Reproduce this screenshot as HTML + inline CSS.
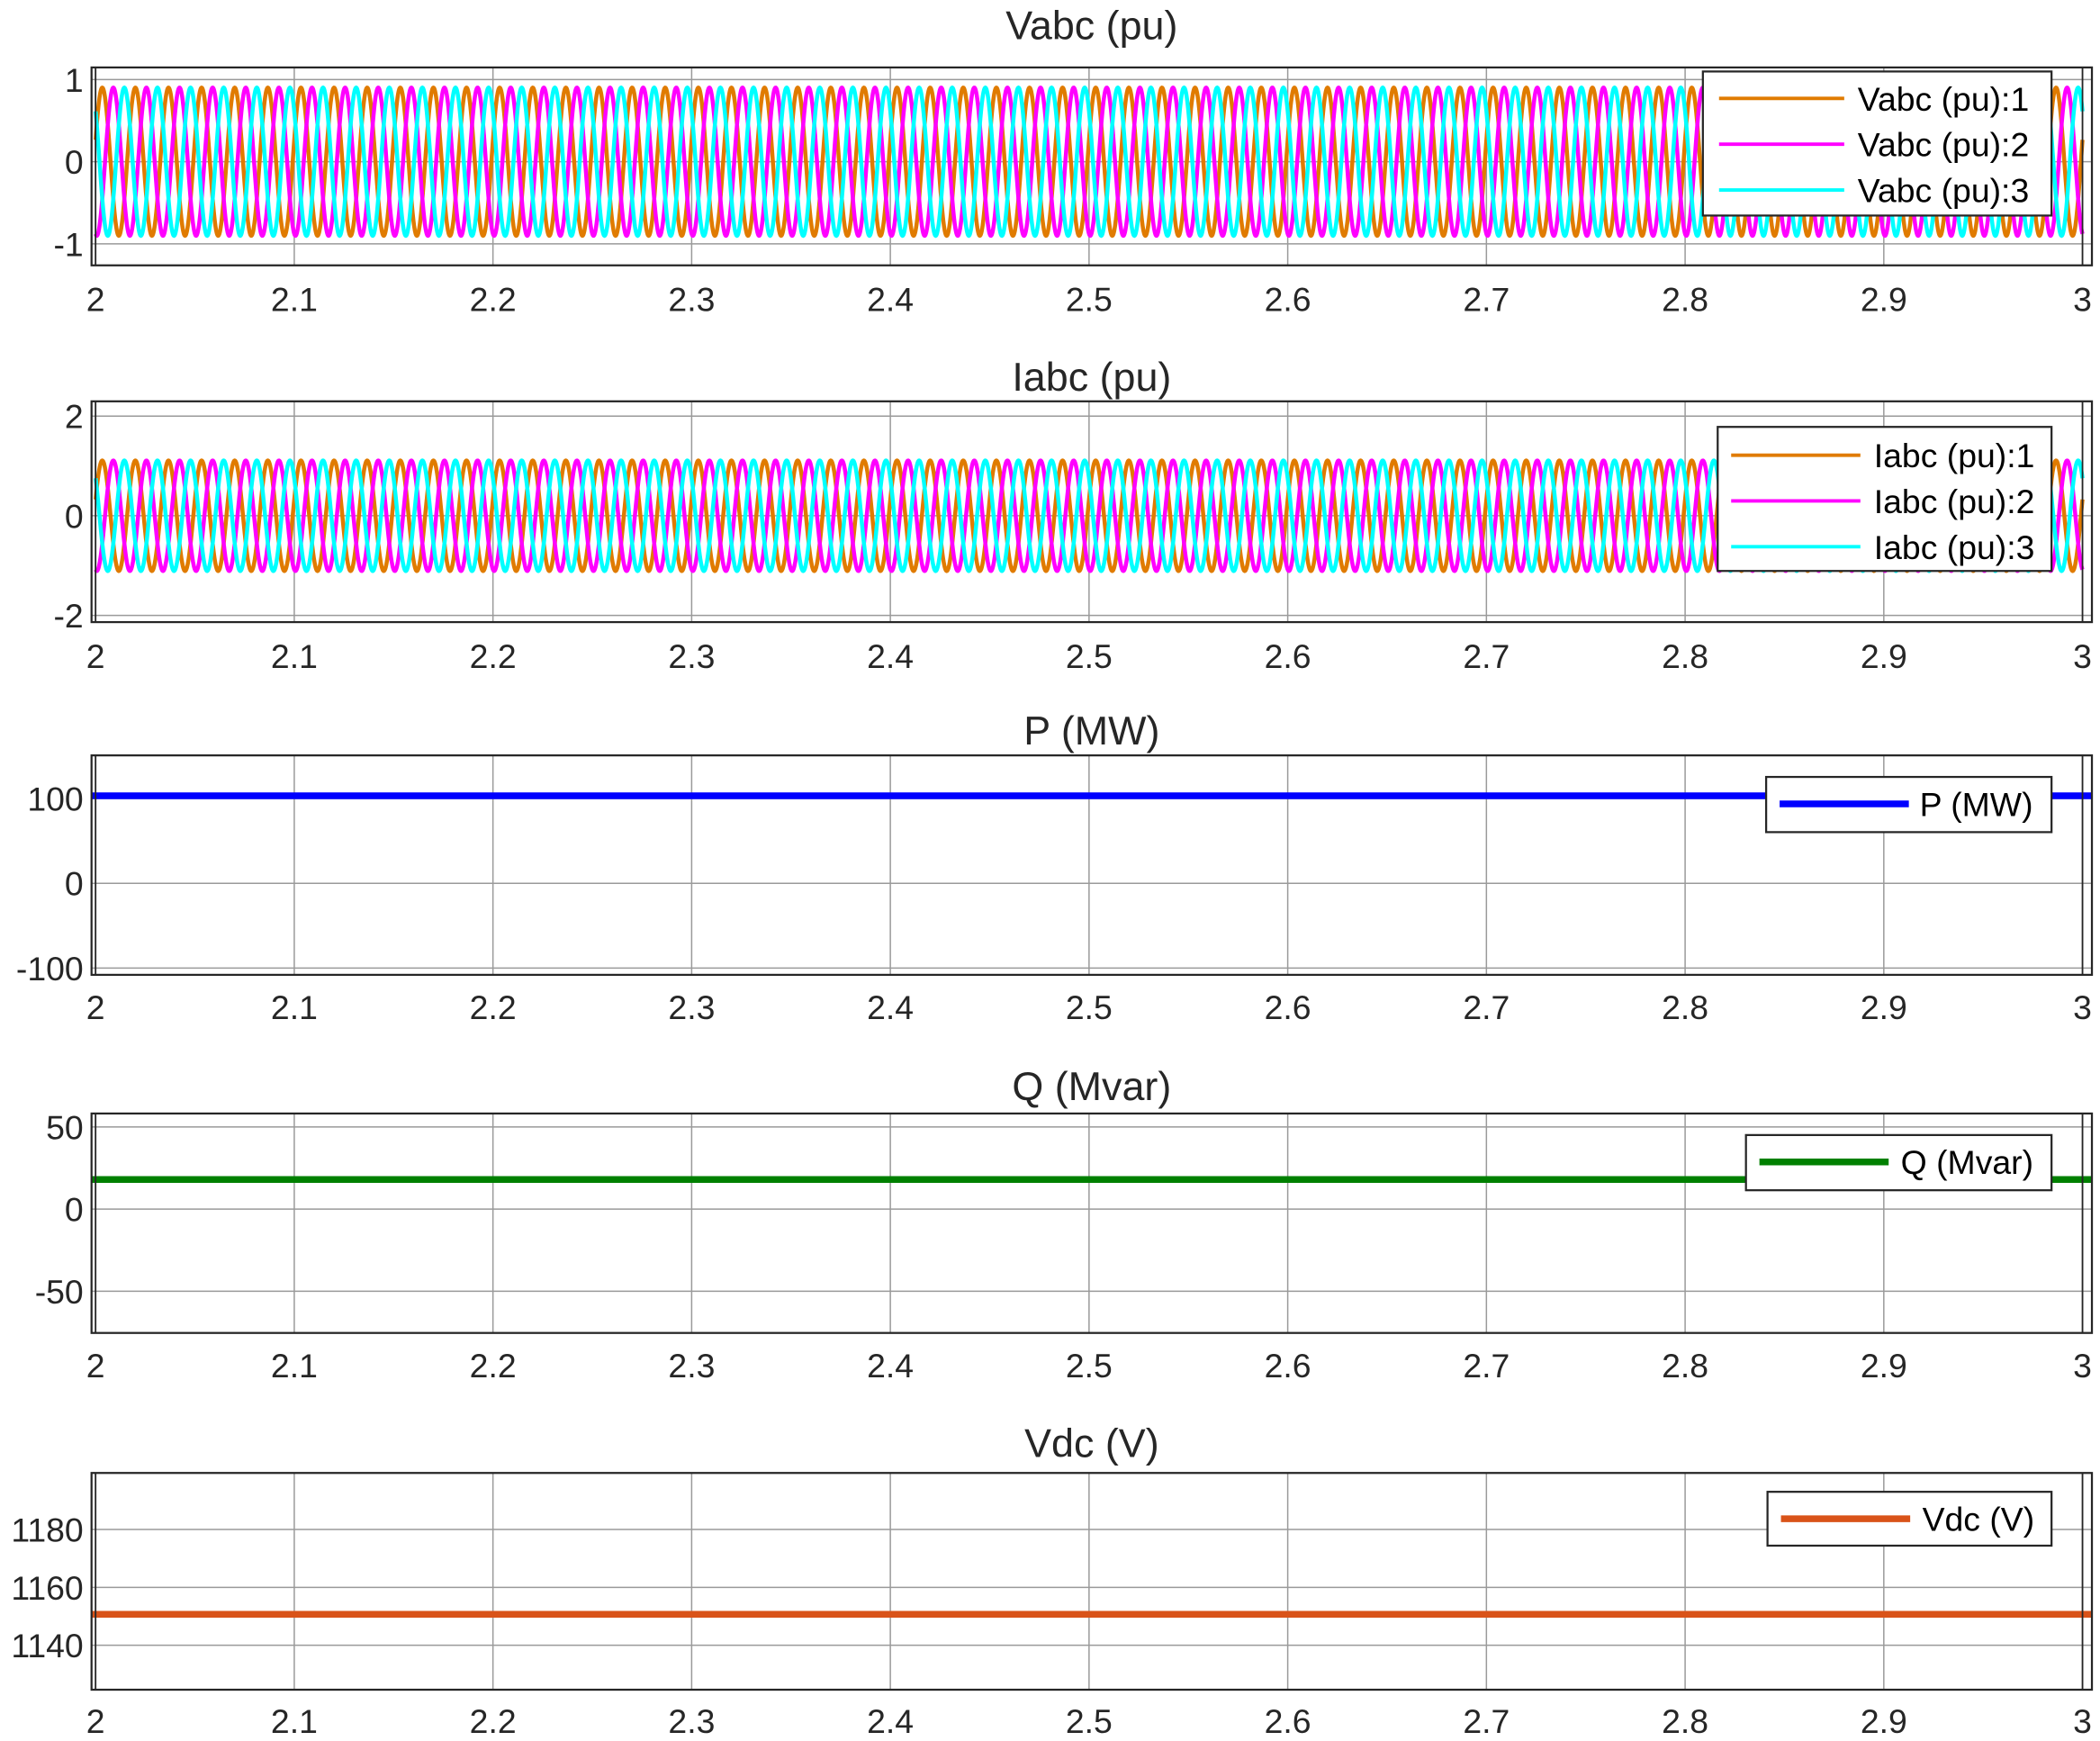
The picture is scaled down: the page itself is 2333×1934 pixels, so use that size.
<!DOCTYPE html>
<html><head><meta charset="utf-8"><style>
html,body{margin:0;padding:0;background:#fff;}
svg{display:block;}
text{font-family:"Liberation Sans",Arial,sans-serif;fill:#262626;}
</style></head><body>
<svg id="s" width="2333" height="1934" viewBox="0 0 1560 1293" xmlns="http://www.w3.org/2000/svg"></svg>
<script>
const S=document.getElementById('s');
const NS='http://www.w3.org/2000/svg';
function el(t,a,txt){const e=document.createElementNS(NS,t);for(const k in a)e.setAttribute(k,a[k]);if(txt!==undefined)e.textContent=txt;S.appendChild(e);return e;}
const L=68,R=1554,X0=71,X1=1547;
function xp(t){return X0+(t-2)*(X1-X0);}
const plots=[
 {title:'Vabc (pu)',top:50,bot:197,ticks:[['1',59],['0',120],['-1',181]],xl:222,ty:29},
 {title:'Iabc (pu)',top:298,bot:462,ticks:[['2',309],['0',383],['-2',457]],xl:487,ty:290},
 {title:'P (MW)',top:561,bot:724,ticks:[['100',593],['0',656],['-100',719]],xl:748,ty:553},
 {title:'Q (Mvar)',top:827,bot:990,ticks:[['50',837],['0',898],['-50',959]],xl:1014,ty:817},
 {title:'Vdc (V)',top:1094,bot:1255,ticks:[['1180',1136],['1160',1179],['1140',1222]],xl:1278,ty:1082},
];
plots.forEach((p,i)=>{
 for(let k=0;k<=10;k++){const x=xp(2+k/10);el('line',{x1:x,y1:p.top,x2:x,y2:p.bot,stroke:'#9a9a9a','stroke-width':1});}
 p.ticks.forEach(t=>{el('line',{x1:L,y1:t[1],x2:R,y2:t[1],stroke:'#9a9a9a','stroke-width':1});
  el('text',{x:62,y:t[1]+9,'text-anchor':'end','font-size':25},t[0]);});
 for(let k=0;k<=10;k++){const x=xp(2+k/10);const lab=k==0?'2':k==10?'3':(2+k/10).toFixed(1);
  el('text',{x:x,y:p.xl+9,'text-anchor':'middle','font-size':25},lab);}
 el('text',{x:811,y:p.ty,'text-anchor':'middle','font-size':30},p.title);
});
function sines(p,cy,amp,cols){
 cols.forEach((c,j)=>{let d='';for(let n=0;n<=6000;n++){const t=2+n/6000;const x=xp(t);const y=cy-amp*Math.sin(2*Math.PI*60*t-j*2*Math.PI/3+0.3);d+=(n?'L':'M')+x.toFixed(2)+' '+y.toFixed(2);}
 el('path',{d:d,fill:'none',stroke:c,'stroke-width':3});});
}
const cols=['#E07B00','#FF00FF','#00FFFF'];
sines(0,120,55,cols);
sines(1,383,41,cols);
el('line',{x1:L,y1:591,x2:R,y2:591,stroke:'#0000FF','stroke-width':5});
el('line',{x1:L,y1:876,x2:R,y2:876,stroke:'#008000','stroke-width':5});
el('line',{x1:L,y1:1199,x2:R,y2:1199,stroke:'#D95319','stroke-width':5});
plots.forEach(p=>{el('rect',{x:L,y:p.top,width:R-L,height:p.bot-p.top,fill:'none',stroke:'#262626','stroke-width':1.5});
 el('line',{x1:X0,y1:p.top,x2:X0,y2:p.bot,stroke:'#262626','stroke-width':1.2});
 el('line',{x1:X1,y1:p.top,x2:X1,y2:p.bot,stroke:'#262626','stroke-width':1.2});});
function legend(x1,y1,x2,y2,items,lx1,lx2,tx,sw){
 el('rect',{x:x1,y:y1,width:x2-x1,height:y2-y1,fill:'#fff',stroke:'#262626','stroke-width':1.5});
 items.forEach(it=>{el('line',{x1:lx1,y1:it[2],x2:lx2,y2:it[2],stroke:it[1],'stroke-width':sw});
  el('text',{x:tx,y:it[2]+9,'font-size':25,style:'fill:#000'},it[0]);});
}
legend(1265,53,1524,160,[['Vabc (pu):1',cols[0],73],['Vabc (pu):2',cols[1],107],['Vabc (pu):3',cols[2],141]],1277,1370,1380,2.6);
legend(1276,317,1524,424,[['Iabc (pu):1',cols[0],338],['Iabc (pu):2',cols[1],372],['Iabc (pu):3',cols[2],406]],1286,1382,1392,2.6);
legend(1312,577,1524,618,[['P (MW)','#0000FF',597]],1322,1418,1426,5);
legend(1297,843,1524,884,[['Q (Mvar)','#008000',863]],1307,1403,1412,5);
legend(1313,1108,1524,1148,[['Vdc (V)','#D95319',1128]],1323,1419,1428,5);
</script>
</body></html>
